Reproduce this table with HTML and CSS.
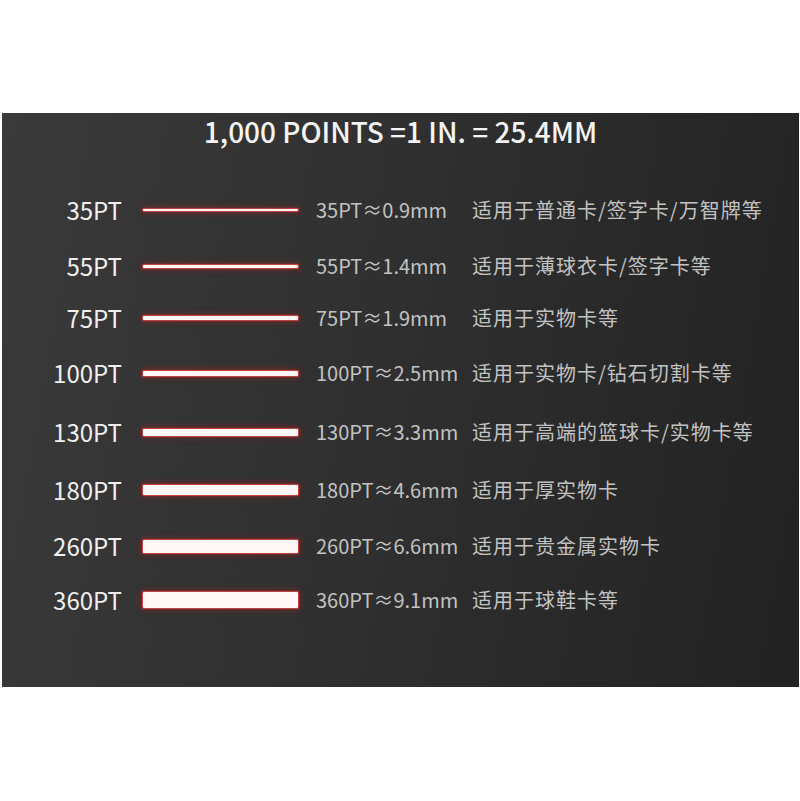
FILE: index.html
```html
<!DOCTYPE html>
<html lang="zh-CN">
<head>
<meta charset="utf-8">
<title>Points</title>
<link rel="stylesheet" href="styles.css">
</head>
<body>
<div class="panel">
  <h1 class="title">1,000 POINTS =1 IN. = 25.4MM</h1>
  <div class="rows">
    <div class="row"><span class="label">35PT</span><span class="bar" style="height:2px"></span><span class="mm">35PT≈0.9mm</span><span class="desc">适用于普通卡/签字卡/万智牌等</span></div>
    <div class="row"><span class="label">55PT</span><span class="bar" style="height:3px"></span><span class="mm">55PT≈1.4mm</span><span class="desc">适用于薄球衣卡/签字卡等</span></div>
    <div class="row"><span class="label">75PT</span><span class="bar" style="height:4px"></span><span class="mm">75PT≈1.9mm</span><span class="desc">适用于实物卡等</span></div>
    <div class="row"><span class="label">100PT</span><span class="bar" style="height:5px"></span><span class="mm">100PT≈2.5mm</span><span class="desc">适用于实物卡/钻石切割卡等</span></div>
    <div class="row"><span class="label">130PT</span><span class="bar" style="height:7px"></span><span class="mm">130PT≈3.3mm</span><span class="desc">适用于高端的篮球卡/实物卡等</span></div>
    <div class="row"><span class="label">180PT</span><span class="bar" style="height:10px"></span><span class="mm">180PT≈4.6mm</span><span class="desc">适用于厚实物卡</span></div>
    <div class="row"><span class="label">260PT</span><span class="bar" style="height:13px"></span><span class="mm">260PT≈6.6mm</span><span class="desc">适用于贵金属实物卡</span></div>
    <div class="row"><span class="label">360PT</span><span class="bar" style="height:16px"></span><span class="mm">360PT≈9.1mm</span><span class="desc">适用于球鞋卡等</span></div>
  </div>
</div>
</body>
</html>
```
FILE: styles.css
```css
html, body {
  margin: 0;
  padding: 0;
  background: #ffffff;
}
body {
  font-family: "Noto Sans CJK SC", "Noto Sans", sans-serif;
  padding-top: 113px;
  padding-left: 2px;
}
.panel {
  width: 797px;
  height: 574px;
  box-sizing: border-box;
  background: linear-gradient(100deg, #3a3a3a 0%, #303030 45%, #222222 100%);
  display: flex;
  flex-direction: column;
}
.title {
  margin: 0;
  height: 36px;
  line-height: 36px;
  font-size: 28px;
  font-weight: 500;
  color: #f4f4f4;
  text-align: center;
}
.rows {
  margin-top: 33px;
  display: flex;
  flex-direction: column;
}
.row {
  height: 56px;
  display: flex;
  align-items: center;
}
.row:nth-child(3) { height: 48px; }
.row:nth-child(4) { height: 62px; }
.row:nth-child(6) { height: 60px; }
.row:nth-child(7) { height: 52px; }
.label {
  width: 120px;
  flex: none;
  text-align: right;
  font-size: 24px;
  color: #f0f0f0;
  line-height: 30px;
}
.bar {
  display: block;
  flex: none;
  width: 155px;
  margin-left: 21px;
  background: #fff6f6;
  border-radius: 1px;
  box-shadow: 0 0 1px 1px rgba(225, 70, 70, 0.9), 0 0 6px 2px rgba(170, 30, 30, 0.5);
}
.mm {
  width: 156px;
  flex: none;
  margin-left: 18px;
  font-size: 20px;
  color: #c2c2c2;
  white-space: nowrap;
  line-height: 28px;
}
.desc {
  font-size: 20px;
  letter-spacing: 1px;
  color: #c2c2c2;
  white-space: nowrap;
  line-height: 28px;
}
```
